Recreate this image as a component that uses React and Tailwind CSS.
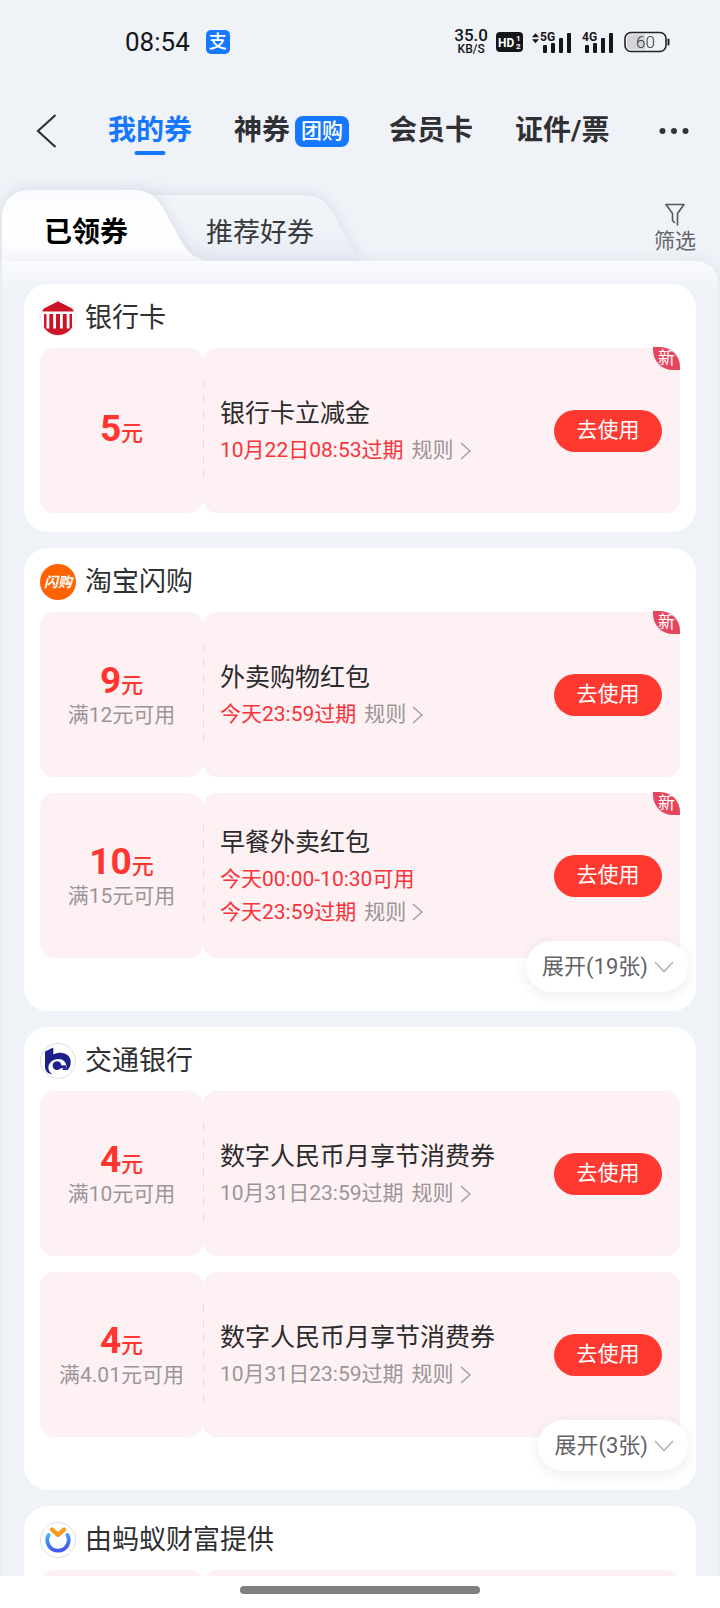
import React from "react";

function BankIcon() {
  return (
    <svg viewBox="0 0 36 36" className="size-9" aria-hidden="true">
      <defs>
        <clipPath id="bank-round">
          <circle cx="18" cy="18" r="17" />
        </clipPath>
      </defs>
      <circle cx="18" cy="18" r="17.5" fill="#fff" stroke="#ece4e6" strokeWidth="1" />
      <g clipPath="url(#bank-round)" fill="#cc1429">
        <path d="M18 1.2 36 10.500v1H0v-1z" />
        <path d="M4 14h28v22H4z" />
        <g fill="#fff">
          <rect x="6.500" y="13" width="2.800" height="15.500" />
          <rect x="13.200" y="13" width="2.800" height="15.500" />
          <rect x="20" y="13" width="2.800" height="15.500" />
          <rect x="26.700" y="13" width="2.800" height="15.500" />
        </g>
      </g>
    </svg>
  );
}

function FlashIcon() {
  return (
    <span className="flex size-9 items-center justify-center rounded-full bg-[#ff6200] text-[14px] font-bold italic leading-none text-white">
      闪购
    </span>
  );
}

function BocomIcon() {
  return (
    <svg viewBox="0 0 36 36" className="size-9" aria-hidden="true">
      <circle cx="18" cy="18" r="17.5" fill="#fff" stroke="#dcdde6" strokeWidth="1" />
      <path
        d="M5 8.600 13.300 4.600V11.500C16 10 19.500 9.600 22.500 10 27.500 10.700 30.800 14.500 30.700 19 30.600 22.500 29.500 25.300 27.500 27H22.800V25.200H26.400C27.200 20.500 24 16.200 18.800 16 12 16 8.400 20.500 8.400 24.800 8.600 27.500 9.800 29.500 12 31.200 8.500 30.800 5 28.500 5 24z"
        fill="#1d2088"
      />
      <circle cx="17" cy="22.700" r="4.400" fill="#1d2088" />
      <path d="M18 22.400h8v2.800h-8z" fill="#1d2088" />
    </svg>
  );
}

function FortuneIcon() {
  return (
    <svg viewBox="0 0 36 36" className="size-9" aria-hidden="true">
      <defs>
        <linearGradient id="fortune-ring" x1="0" y1="0" x2="0.3" y2="1">
          <stop offset="0" stopColor="#3fb2ff" />
          <stop offset="1" stopColor="#4257f5" />
        </linearGradient>
      </defs>
      <circle cx="18" cy="18" r="17.5" fill="#fff" stroke="#dcdde6" strokeWidth="1" />
      <path
        d="M8.600 12.900A10.700 10.700 0 1 0 27.400 12.900"
        fill="none"
        stroke="url(#fortune-ring)"
        strokeWidth="3.800"
        strokeLinecap="round"
      />
      <path
        d="M12 7.600 18 12.800l6-5.200"
        fill="none"
        stroke="#f99a1c"
        strokeWidth="4.400"
        strokeLinecap="round"
        strokeLinejoin="round"
      />
    </svg>
  );
}

function Signal({ label, updown }) {
  return (
    <svg viewBox="0 0 40 24" className="h-6 w-10" aria-label={label}>
      {updown && (
        <path d="M0 7.200 3.500 3.200 7 7.200zM0 9.200h7L3.500 13.200z" fill="#15161a" />
      )}
      <text
        x="8"
        y="11"
        fontSize="12"
        fontWeight="700"
        fontFamily="Roboto, sans-serif"
        fill="#15161a"
      >
        {label}
      </text>
      <g fill="#15161a">
        <rect x="11" y="15" width="4" height="8" rx="1" />
        <rect x="19" y="13" width="4" height="10" rx="1" />
        <rect x="27" y="8" width="4" height="15" rx="1" />
        <rect x="35" y="3" width="4" height="20" rx="1" />
      </g>
    </svg>
  );
}

function StatusBar() {
  return (
    <div className="flex h-[84px] shrink-0 items-center pl-[125px] pr-[50px] text-[#15161a]">
      <time className="text-[26px] leading-none">08:54</time>
      <span className="ml-4 flex size-6 items-center justify-center rounded-[5px] bg-[#1677ff] text-[18px] font-medium leading-none text-white">
        支
      </span>
      <div className="ml-auto flex items-center">
        <div className="flex flex-col items-center font-medium">
          <span className="text-[17px] leading-[14px]">35.0</span>
          <span className="text-[12px] leading-[14px]">KB/S</span>
        </div>
        <svg viewBox="0 0 27 20" className="ml-2 h-5 w-[27px]" aria-label="HD">
          <rect width="27" height="20" rx="4" fill="#15161a" />
          <g fill="#fff" fontFamily="Roboto, sans-serif" fontWeight="700">
            <text x="2" y="15" fontSize="12">HD</text>
            <text x="20" y="9" fontSize="8">1</text>
            <text x="20" y="17" fontSize="8">2</text>
          </g>
        </svg>
        <div className="ml-[9px]">
          <Signal label="5G" updown />
        </div>
        <div className="ml-[2px]">
          <Signal label="4G" />
        </div>
        <svg viewBox="0 0 46 22" className="ml-[10px] h-[22px] w-[46px]" aria-label="60%">
          <path d="M7 3.500h14v15H7a4 4 0 0 1-4-4v-7a4 4 0 0 1 4-4z" fill="#d2d4d8" />
          <rect x="1" y="1.500" width="41" height="19" rx="6" fill="none" stroke="#222327" strokeWidth="1.600" />
          <rect x="43.500" y="7.500" width="2" height="7" rx="1" fill="#222327" />
          <text x="21.500" y="17" fontSize="17" fontWeight="300" textAnchor="middle" fontFamily="Roboto, sans-serif" fill="#33353a">
            60
          </text>
        </svg>
      </div>
    </div>
  );
}

function TopNav() {
  return (
    <nav className="flex h-[94px] shrink-0 items-center pl-9 pr-[31px] text-[28px] font-bold leading-10 text-[#2f3033]">
      <button type="button" aria-label="返回" className="mr-[51px]">
        <svg viewBox="0 0 21 34" className="h-[34px] w-[21px]" fill="none" stroke="#333" strokeWidth="2.200">
          <path d="M19.500 1 2 17l17.500 16" />
        </svg>
      </button>
      <a href="#mine" className="relative text-[#1677ff]">
        我的券
        <span className="absolute -bottom-1 left-1/2 h-1 w-[31px] -translate-x-1/2 rounded-full bg-[#1677ff]" />
      </a>
      <a href="#deals" className="ml-[42px] flex items-center gap-[5px]">
        神券
        <span className="rounded-lg bg-[#1677ff] px-[6px] text-[21px] font-medium leading-[31px] text-white">
          团购
        </span>
      </a>
      <a href="#member" className="ml-10">会员卡</a>
      <a href="#tickets" className="ml-[42px]">证件/票</a>
      <button type="button" aria-label="更多" className="ml-auto">
        <svg viewBox="0 0 30 8" className="h-2 w-[30px]" fill="#333">
          <circle cx="3.500" cy="4" r="3" />
          <circle cx="15" cy="4" r="3" />
          <circle cx="26.500" cy="4" r="3" />
        </svg>
      </button>
    </nav>
  );
}

function TabStrip() {
  return (
    <div className="relative flex h-[83px] shrink-0 items-end">
      <svg viewBox="0 0 400 83" className="absolute bottom-0 left-0 h-[83px] w-[400px] overflow-visible" aria-hidden="true">
        <defs>
          <linearGradient id="tab-front" x1="0" y1="0" x2="0" y2="1">
            <stop offset="0" stopColor="#fbfcff" />
            <stop offset="0.500" stopColor="#ffffff" />
            <stop offset="1" stopColor="#fafbfe" />
          </linearGradient>
          <linearGradient id="tab-back" x1="0" y1="0" x2="0" y2="1">
            <stop offset="0" stopColor="#f1f5f8" />
            <stop offset="0.500" stopColor="#eff2f7" />
            <stop offset="1" stopColor="#e8ebf3" />
          </linearGradient>
          <filter id="tab-shadow" x="-20%" y="-40%" width="140%" height="160%">
            <feDropShadow dx="0" dy="-1" stdDeviation="7" floodColor="#c9cede" floodOpacity="0.600" />
          </filter>
        </defs>
        <path
          d="M130 17H302C318 17 326 23 333 35L359 83H130z"
          fill="url(#tab-back)"
          filter="url(#tab-shadow)"
        />
        <path
          d="M2 83V40C2 23 13 12 30 12H134C149 12 158 20 165 34L180 61C187 75 196 83 212 83z"
          fill="url(#tab-front)"
          filter="url(#tab-shadow)"
        />
      </svg>
      <div role="tablist" className="relative flex items-center pb-2 pl-11">
        <button type="button" role="tab" aria-selected="true" className="text-[28px] font-bold leading-10 text-black">
          已领券
        </button>
        <button type="button" role="tab" aria-selected="false" className="ml-[78px] text-[27px] leading-10 text-[#38393d]">
          推荐好券
        </button>
      </div>
      <button type="button" className="relative mb-[6px] ml-auto mr-6 flex flex-col items-center text-[21px] leading-7 text-[#636569]">
        <svg viewBox="0 0 20 24" className="h-6 w-5" fill="none" stroke="#55575c" strokeWidth="1.600" strokeLinejoin="round" strokeLinecap="round">
          <path d="M9.500 19.500 7.500 17.500V10.500L1 1.500h18l-6.500 9V22" />
        </svg>
        筛选
      </button>
    </div>
  );
}

function Coupon({ amount, limit, title, lines, muted, isNew }) {
  const last = lines.length - 1;
  return (
    <article className="relative flex h-[165px]">
      <div className="flex w-[163px] shrink-0 flex-col items-center justify-center rounded-[14px] bg-[#fef1f3] pb-1">
        <p className="flex items-baseline text-[#ff3630]">
          <span className="text-[37px] font-bold leading-[44px]">{amount}</span>
          <span className="text-[22px] font-medium">元</span>
        </p>
        {limit && <p className="whitespace-nowrap text-[21px] leading-6 text-[#9b9599]">{limit}</p>}
      </div>
      <div className="relative z-10 my-8 -mr-px w-px bg-[repeating-linear-gradient(#e6dcdf_0_8px,transparent_8px_15px)]" />
      <div className="flex min-w-0 flex-1 items-center rounded-[14px] bg-[#fef1f3] pl-[17px] pr-[18px]">
        <div className="min-w-0 flex-1">
          <h3 className="text-[25px] leading-10 text-[#2b2a2c]">{title}</h3>
          {lines.map((line, i) => (
            <p
              key={line}
              className={`flex items-center gap-2 whitespace-nowrap text-[21px] leading-[33px] ${
                muted ? "text-[#9b9599]" : "text-[#f7343a]"
              }`}
            >
              {line}
              {i === last && (
                <a href="#rules" className="flex items-center gap-[6px] text-[#9b9599]">
                  规则
                  <svg viewBox="0 0 11 18" className="h-[18px] w-[11px]" fill="none" stroke="#a39da1" strokeWidth="1.500">
                    <path d="M1 1l9 8-9 8" />
                  </svg>
                </a>
              )}
            </p>
          ))}
        </div>
        <button type="button" className="h-[42px] w-[108px] shrink-0 rounded-full bg-[#ff392f] text-[21px] text-white">
          去使用
        </button>
      </div>
      {isNew && (
        <span className="absolute -top-px right-0 w-[27px] rounded-bl-[20px] rounded-tr-[20px] bg-[#e5455d] text-center text-[17px] leading-[23px] text-white">
          新
        </span>
      )}
    </article>
  );
}

function CouponPlaceholder() {
  return (
    <div className="flex h-[165px]" aria-hidden="true">
      <div className="w-[163px] shrink-0 rounded-[14px] bg-[#fef1f3]" />
      <div className="flex-1 rounded-[14px] bg-[#fef1f3]" />
    </div>
  );
}

function CouponGroup({ icon, name, coupons, more }) {
  return (
    <section className={`relative rounded-3xl bg-white px-4 ${more ? "pb-[53px]" : "pb-[19px]"}`}>
      <h2 className="flex h-16 items-center gap-[9px] pt-1 text-[27px] text-[#2f3033]">
        {icon}
        {name}
      </h2>
      <div className="flex flex-col gap-4">
        {coupons.length === 0 && <CouponPlaceholder />}
        {coupons.map((coupon, i) => (
          <Coupon key={i} {...coupon} />
        ))}
      </div>
      {more && (
        <button
          type="button"
          className="absolute bottom-[19px] right-2 flex h-[51px] items-center gap-[6px] rounded-full bg-white pl-4 pr-[14px] text-[22px] text-[#636366] shadow-[0_3px_14px_rgba(60,40,50,0.09)]"
        >
          {more}
          <svg viewBox="0 0 20 12" className="h-3 w-5" fill="none" stroke="#b3b3b6" strokeWidth="1.600">
            <path d="M1 1l9 9.500L19 1" />
          </svg>
        </button>
      )}
    </section>
  );
}

const groups = [
  {
    name: "银行卡",
    icon: <BankIcon />,
    coupons: [{ amount: "5", title: "银行卡立减金", lines: ["10月22日08:53过期"], isNew: true }],
  },
  {
    name: "淘宝闪购",
    icon: <FlashIcon />,
    more: "展开(19张)",
    coupons: [
      { amount: "9", limit: "满12元可用", title: "外卖购物红包", lines: ["今天23:59过期"], isNew: true },
      {
        amount: "10",
        limit: "满15元可用",
        title: "早餐外卖红包",
        lines: ["今天00:00-10:30可用", "今天23:59过期"],
        isNew: true,
      },
    ],
  },
  {
    name: "交通银行",
    icon: <BocomIcon />,
    more: "展开(3张)",
    coupons: [
      { amount: "4", limit: "满10元可用", title: "数字人民币月享节消费券", lines: ["10月31日23:59过期"], muted: true },
      { amount: "4", limit: "满4.01元可用", title: "数字人民币月享节消费券", lines: ["10月31日23:59过期"], muted: true },
    ],
  },
  {
    name: "由蚂蚁财富提供",
    icon: <FortuneIcon />,
    coupons: [],
  },
];

export default function App() {
  return (
    <div className="flex h-screen flex-col overflow-hidden bg-[#eff2f7] font-[Roboto,'Noto_Sans_CJK_SC',sans-serif]">
      <StatusBar />
      <TopNav />
      <TabStrip />
      <main className="relative mx-[2px] min-h-0 flex-1 overflow-y-auto rounded-tr-[22px] bg-[linear-gradient(#fafbfe,#eff2f7_28px)] shadow-[0_-2px_14px_rgba(190,196,215,0.25)] [scrollbar-width:none]">
        <div className="flex flex-col gap-4 px-[22px] pt-[23px]">
          {groups.map((group) => (
            <CouponGroup key={group.name} {...group} />
          ))}
        </div>
      </main>
      <footer className="relative flex h-8 shrink-0 items-start justify-center bg-white pt-[10px]">
        <div className="h-2 w-1/3 rounded-full bg-[#808080]" />
      </footer>
    </div>
  );
}
